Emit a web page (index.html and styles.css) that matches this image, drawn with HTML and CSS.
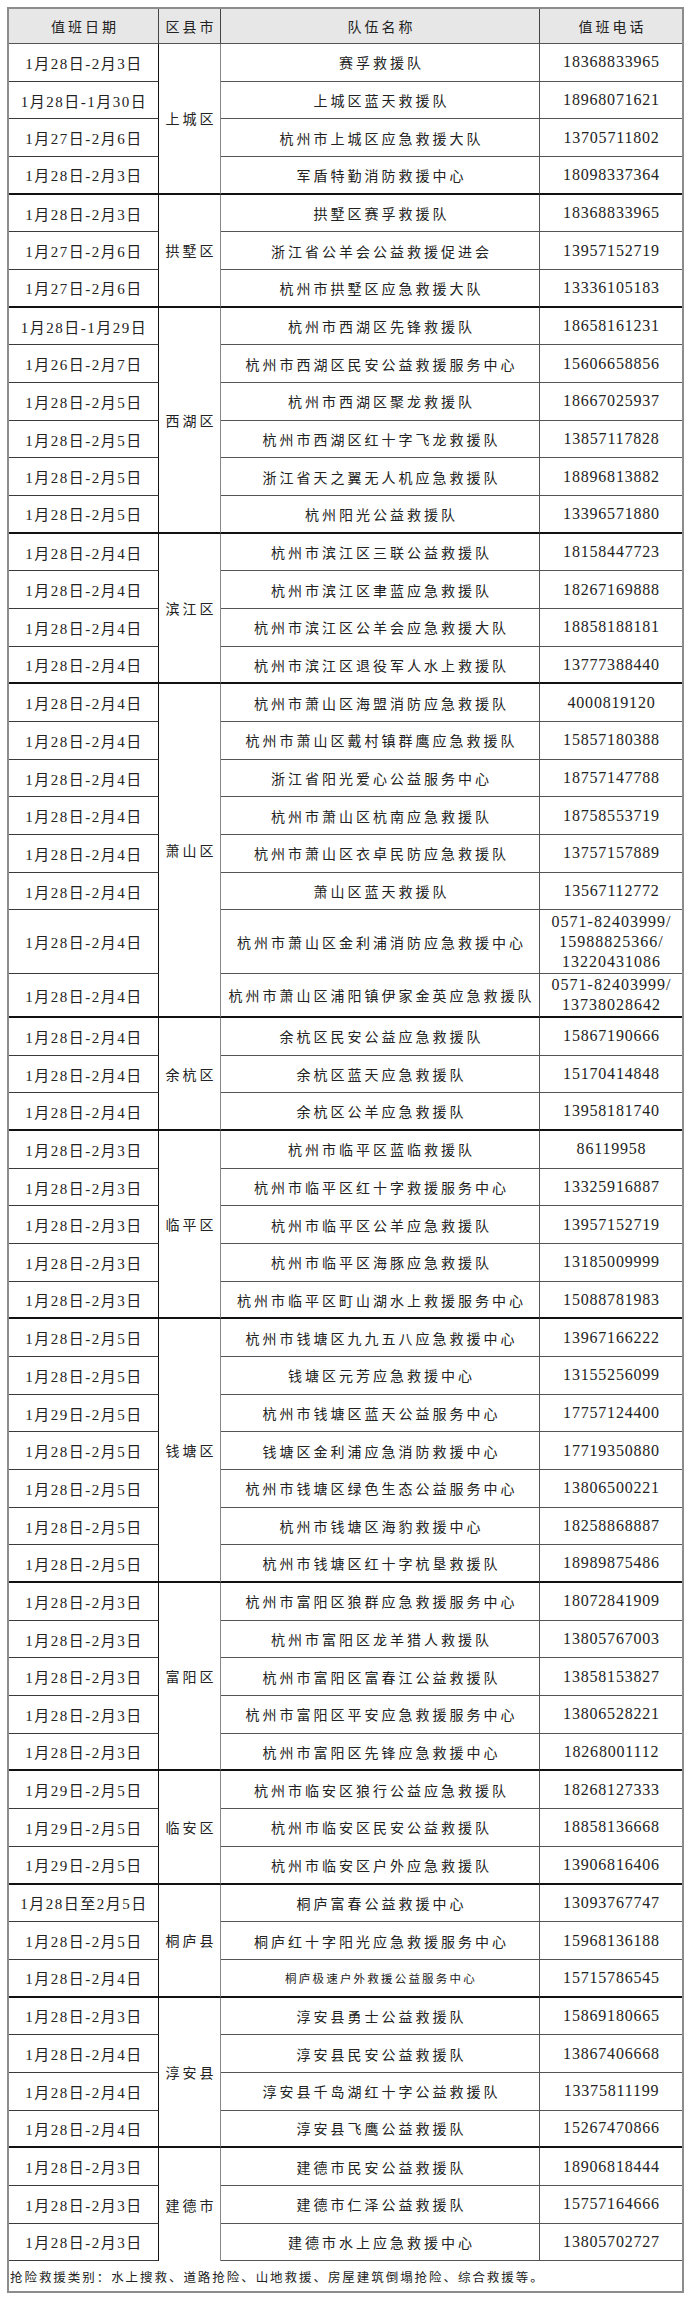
FILE: index.html
```html
<!DOCTYPE html>
<html lang="zh-CN">
<head>
<meta charset="utf-8">
<title>值班表</title>
<link rel="stylesheet" href="styles.css">
</head>
<body>
<div class="sheet">
  <div class="c head">值班日期</div>
  <div class="c head">区县市</div>
  <div class="c head">队伍名称</div>
  <div class="c head last">值班电话</div>

  <div class="c date">1月28日-2月3日</div>
  <div class="c dist end span4">上城区</div>
  <div class="c team">赛孚救援队</div>
  <div class="c phone">18368833965</div>
  <div class="c date">1月28日-1月30日</div>
  <div class="c team">上城区蓝天救援队</div>
  <div class="c phone">18968071621</div>
  <div class="c date">1月27日-2月6日</div>
  <div class="c team">杭州市上城区应急救援大队</div>
  <div class="c phone">13705711802</div>
  <div class="c date end">1月28日-2月3日</div>
  <div class="c team end">军盾特勤消防救援中心</div>
  <div class="c phone end">18098337364</div>

  <div class="c date">1月28日-2月3日</div>
  <div class="c dist end span3">拱墅区</div>
  <div class="c team">拱墅区赛孚救援队</div>
  <div class="c phone">18368833965</div>
  <div class="c date">1月27日-2月6日</div>
  <div class="c team">浙江省公羊会公益救援促进会</div>
  <div class="c phone">13957152719</div>
  <div class="c date end">1月27日-2月6日</div>
  <div class="c team end">杭州市拱墅区应急救援大队</div>
  <div class="c phone end">13336105183</div>

  <div class="c date">1月28日-1月29日</div>
  <div class="c dist end span6">西湖区</div>
  <div class="c team">杭州市西湖区先锋救援队</div>
  <div class="c phone">18658161231</div>
  <div class="c date">1月26日-2月7日</div>
  <div class="c team">杭州市西湖区民安公益救援服务中心</div>
  <div class="c phone">15606658856</div>
  <div class="c date">1月28日-2月5日</div>
  <div class="c team">杭州市西湖区聚龙救援队</div>
  <div class="c phone">18667025937</div>
  <div class="c date">1月28日-2月5日</div>
  <div class="c team">杭州市西湖区红十字飞龙救援队</div>
  <div class="c phone">13857117828</div>
  <div class="c date">1月28日-2月5日</div>
  <div class="c team">浙江省天之翼无人机应急救援队</div>
  <div class="c phone">18896813882</div>
  <div class="c date end">1月28日-2月5日</div>
  <div class="c team end">杭州阳光公益救援队</div>
  <div class="c phone end">13396571880</div>

  <div class="c date">1月28日-2月4日</div>
  <div class="c dist end span4">滨江区</div>
  <div class="c team">杭州市滨江区三联公益救援队</div>
  <div class="c phone">18158447723</div>
  <div class="c date">1月28日-2月4日</div>
  <div class="c team">杭州市滨江区聿蓝应急救援队</div>
  <div class="c phone">18267169888</div>
  <div class="c date">1月28日-2月4日</div>
  <div class="c team">杭州市滨江区公羊会应急救援大队</div>
  <div class="c phone">18858188181</div>
  <div class="c date end">1月28日-2月4日</div>
  <div class="c team end">杭州市滨江区退役军人水上救援队</div>
  <div class="c phone end">13777388440</div>

  <div class="c date">1月28日-2月4日</div>
  <div class="c dist end span8">萧山区</div>
  <div class="c team">杭州市萧山区海盟消防应急救援队</div>
  <div class="c phone">4000819120</div>
  <div class="c date">1月28日-2月4日</div>
  <div class="c team">杭州市萧山区戴村镇群鹰应急救援队</div>
  <div class="c phone">15857180388</div>
  <div class="c date">1月28日-2月4日</div>
  <div class="c team">浙江省阳光爱心公益服务中心</div>
  <div class="c phone">18757147788</div>
  <div class="c date">1月28日-2月4日</div>
  <div class="c team">杭州市萧山区杭南应急救援队</div>
  <div class="c phone">18758553719</div>
  <div class="c date">1月28日-2月4日</div>
  <div class="c team">杭州市萧山区衣卓民防应急救援队</div>
  <div class="c phone">13757157889</div>
  <div class="c date">1月28日-2月4日</div>
  <div class="c team">萧山区蓝天救援队</div>
  <div class="c phone">13567112772</div>
  <div class="c date">1月28日-2月4日</div>
  <div class="c team">杭州市萧山区金利浦消防应急救援中心</div>
  <div class="c phone multi">0571-82403999/<br>15988825366/<br>13220431086</div>
  <div class="c date end">1月28日-2月4日</div>
  <div class="c team end">杭州市萧山区浦阳镇伊家金英应急救援队</div>
  <div class="c phone multi end">0571-82403999/<br>13738028642</div>

  <div class="c date">1月28日-2月4日</div>
  <div class="c dist end span3">余杭区</div>
  <div class="c team">余杭区民安公益应急救援队</div>
  <div class="c phone">15867190666</div>
  <div class="c date">1月28日-2月4日</div>
  <div class="c team">余杭区蓝天应急救援队</div>
  <div class="c phone">15170414848</div>
  <div class="c date end">1月28日-2月4日</div>
  <div class="c team end">余杭区公羊应急救援队</div>
  <div class="c phone end">13958181740</div>

  <div class="c date">1月28日-2月3日</div>
  <div class="c dist end span5">临平区</div>
  <div class="c team">杭州市临平区蓝临救援队</div>
  <div class="c phone">86119958</div>
  <div class="c date">1月28日-2月3日</div>
  <div class="c team">杭州市临平区红十字救援服务中心</div>
  <div class="c phone">13325916887</div>
  <div class="c date">1月28日-2月3日</div>
  <div class="c team">杭州市临平区公羊应急救援队</div>
  <div class="c phone">13957152719</div>
  <div class="c date">1月28日-2月3日</div>
  <div class="c team">杭州市临平区海豚应急救援队</div>
  <div class="c phone">13185009999</div>
  <div class="c date end">1月28日-2月3日</div>
  <div class="c team end">杭州市临平区町山湖水上救援服务中心</div>
  <div class="c phone end">15088781983</div>

  <div class="c date">1月28日-2月5日</div>
  <div class="c dist end span7">钱塘区</div>
  <div class="c team">杭州市钱塘区九九五八应急救援中心</div>
  <div class="c phone">13967166222</div>
  <div class="c date">1月28日-2月5日</div>
  <div class="c team">钱塘区元芳应急救援中心</div>
  <div class="c phone">13155256099</div>
  <div class="c date">1月29日-2月5日</div>
  <div class="c team">杭州市钱塘区蓝天公益服务中心</div>
  <div class="c phone">17757124400</div>
  <div class="c date">1月28日-2月5日</div>
  <div class="c team">钱塘区金利浦应急消防救援中心</div>
  <div class="c phone">17719350880</div>
  <div class="c date">1月28日-2月5日</div>
  <div class="c team">杭州市钱塘区绿色生态公益服务中心</div>
  <div class="c phone">13806500221</div>
  <div class="c date">1月28日-2月5日</div>
  <div class="c team">杭州市钱塘区海豹救援中心</div>
  <div class="c phone">18258868887</div>
  <div class="c date end">1月28日-2月5日</div>
  <div class="c team end">杭州市钱塘区红十字杭垦救援队</div>
  <div class="c phone end">18989875486</div>

  <div class="c date">1月28日-2月3日</div>
  <div class="c dist end span5">富阳区</div>
  <div class="c team">杭州市富阳区狼群应急救援服务中心</div>
  <div class="c phone">18072841909</div>
  <div class="c date">1月28日-2月3日</div>
  <div class="c team">杭州市富阳区龙羊猎人救援队</div>
  <div class="c phone">13805767003</div>
  <div class="c date">1月28日-2月3日</div>
  <div class="c team">杭州市富阳区富春江公益救援队</div>
  <div class="c phone">13858153827</div>
  <div class="c date">1月28日-2月3日</div>
  <div class="c team">杭州市富阳区平安应急救援服务中心</div>
  <div class="c phone">13806528221</div>
  <div class="c date end">1月28日-2月3日</div>
  <div class="c team end">杭州市富阳区先锋应急救援中心</div>
  <div class="c phone end">18268001112</div>

  <div class="c date">1月29日-2月5日</div>
  <div class="c dist end span3">临安区</div>
  <div class="c team">杭州市临安区狼行公益应急救援队</div>
  <div class="c phone">18268127333</div>
  <div class="c date">1月29日-2月5日</div>
  <div class="c team">杭州市临安区民安公益救援队</div>
  <div class="c phone">18858136668</div>
  <div class="c date end">1月29日-2月5日</div>
  <div class="c team end">杭州市临安区户外应急救援队</div>
  <div class="c phone end">13906816406</div>

  <div class="c date">1月28日至2月5日</div>
  <div class="c dist end span3">桐庐县</div>
  <div class="c team">桐庐富春公益救援中心</div>
  <div class="c phone">13093767747</div>
  <div class="c date">1月28日-2月5日</div>
  <div class="c team">桐庐红十字阳光应急救援服务中心</div>
  <div class="c phone">15968136188</div>
  <div class="c date end">1月28日-2月4日</div>
  <div class="c team small end">桐庐极速户外救援公益服务中心</div>
  <div class="c phone end">15715786545</div>

  <div class="c date">1月28日-2月3日</div>
  <div class="c dist end span4">淳安县</div>
  <div class="c team">淳安县勇士公益救援队</div>
  <div class="c phone">15869180665</div>
  <div class="c date">1月28日-2月4日</div>
  <div class="c team">淳安县民安公益救援队</div>
  <div class="c phone">13867406668</div>
  <div class="c date">1月28日-2月4日</div>
  <div class="c team">淳安县千岛湖红十字公益救援队</div>
  <div class="c phone">13375811199</div>
  <div class="c date end">1月28日-2月4日</div>
  <div class="c team end">淳安县飞鹰公益救援队</div>
  <div class="c phone end">15267470866</div>

  <div class="c date">1月28日-2月3日</div>
  <div class="c dist span3">建德市</div>
  <div class="c team">建德市民安公益救援队</div>
  <div class="c phone">18906818444</div>
  <div class="c date">1月28日-2月3日</div>
  <div class="c team">建德市仁泽公益救援队</div>
  <div class="c phone">15757164666</div>
  <div class="c date">1月28日-2月3日</div>
  <div class="c team">建德市水上应急救援中心</div>
  <div class="c phone">13805702727</div>

  <div class="note">抢险救援类别：水上搜救、道路抢险、山地救援、房屋建筑倒塌抢险、综合救援等。</div>
</div>
</body>
</html>
```

FILE: styles.css
```css
html, body {
  margin: 0;
  padding: 0;
  background: #ffffff;
}

body {
  padding: 7px 0 0 7px;
  font-family: "Noto Sans CJK SC", sans-serif;
  color: #222;
}

.sheet {
  box-sizing: border-box;
  width: 677px;
  border: 2px solid #8c8c8c;
  display: grid;
  grid-template-columns: 150px 62px 319px 142px;
  grid-template-rows:
    35px
    repeat(23, 37.686px)
    63.6px 44px
    repeat(33, 37.686px)
    30px;
}

.c {
  box-sizing: border-box;
  display: flex;
  align-items: center;
  justify-content: center;
  text-align: center;
  border-right: 1px solid #444;
  border-bottom: 1px solid #3a3a3a;
  white-space: nowrap;
  overflow: hidden;
}

.head {
  background: #e7e7e7;
  font-size: 14px;
  letter-spacing: 3px;
  padding-left: 3px;
  border-bottom: 1px solid #555;
}

.head.last,
.phone {
  border-right: none;
}

.date {
  font-family: "Liberation Serif", "Noto Sans CJK SC", serif;
  font-size: 15px;
  letter-spacing: 1.5px;
  padding-left: 1px;
  border-right: 1px solid #111;
}

.dist {
  font-size: 14px;
  letter-spacing: 3px;
  padding-left: 3px;
  border-right: 1px solid #888;
  border-bottom: none;
}

.span3 { grid-row: span 3; }
.span4 { grid-row: span 4; }
.span5 { grid-row: span 5; }
.span6 { grid-row: span 6; }
.span7 { grid-row: span 7; }
.span8 { grid-row: span 8; }

.team {
  font-size: 14px;
  letter-spacing: 3px;
  padding-left: 3px;
  border-right: 1px solid #555;
  border-bottom-color: #555;
}

.team.small {
  font-size: 11.5px;
  letter-spacing: 2.2px;
  padding-left: 2px;
}

.phone {
  font-family: "Liberation Serif", serif;
  font-size: 16px;
  letter-spacing: 0.8px;
  padding-left: 1px;
  border-bottom-color: #555;
}

.phone.multi {
  line-height: 20px;
  letter-spacing: 1px;
}

.c.end {
  border-bottom: 2px solid #111;
}

.note {
  grid-column: 1 / -1;
  display: flex;
  align-items: center;
  padding-left: 1px;
  font-size: 12.5px;
  letter-spacing: 1.95px;
  color: #222;
}
```
